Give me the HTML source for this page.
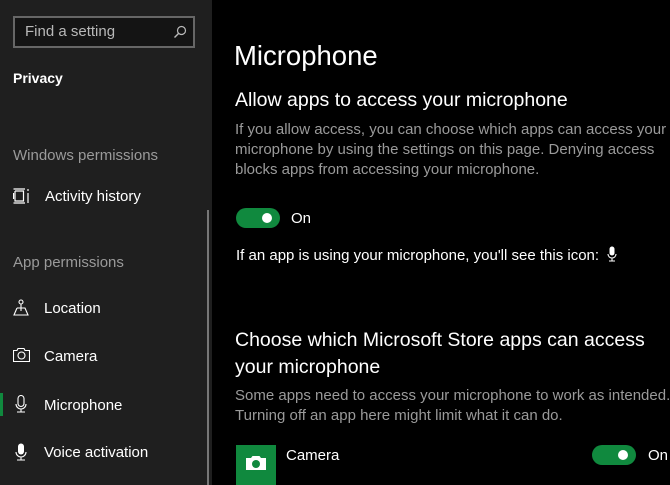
<!DOCTYPE html>
<html><head><style>
body{margin:0;width:670px;height:485px;overflow:hidden;background:#000;font-family:"Liberation Sans",sans-serif;color:#fff;position:relative}
.a{position:absolute;white-space:nowrap}
#side{position:absolute;left:0;top:0;width:212px;height:485px;background:#1f1f1f}
.g{color:#9a9a9a}
.tg{position:absolute;width:44px;height:20px;border-radius:10px;background:#10893e}
.tg:after{content:"";position:absolute;right:8px;top:5px;width:10px;height:10px;border-radius:5px;background:#fff}
</style></head><body>
<div id="side">
<div class="a" style="left:13px;top:16px;width:178px;height:28px;border:2px solid #666;background:#141414"></div>
<div class="a" style="left:25px;top:23px;font-size:15px;color:#b8b8b8">Find a setting</div>
<svg class="a" style="left:173px;top:25px" width="14" height="14" viewBox="0 0 14 14"><circle cx="8.5" cy="5.5" r="4" fill="none" stroke="#bbb" stroke-width="1.2"/><path d="M5.5 8.5L1.5 12.5" stroke="#bbb" stroke-width="1.4"/></svg>
<div class="a" style="left:13px;top:70px;font-size:14px;font-weight:bold">Privacy</div>
<div class="a g" style="left:13px;top:147px;font-size:15px">Windows permissions</div>
<svg class="a" style="left:13px;top:188px" width="17" height="16" viewBox="0 0 17 16"><path d="M0.5 1H12M0.5 15H12M2 3H10.5V13H2V3M0.5 5v6M15 1v2M15 5v10" stroke="#fff" fill="none" stroke-width="1.2"/></svg>
<div class="a" style="left:45px;top:188px;font-size:15px">Activity history</div>
<div class="a g" style="left:13px;top:254px;font-size:15px">App permissions</div>
<svg class="a" style="left:13px;top:299px" width="16" height="17" viewBox="0 0 16 17"><circle cx="8" cy="3" r="2" fill="none" stroke="#fff" stroke-width="1.1"/><path d="M8 5V12M4 9H12L15 16H1L4 9" fill="none" stroke="#fff" stroke-width="1.1"/></svg>
<div class="a" style="left:44px;top:300px;font-size:15px">Location</div>
<svg class="a" style="left:13px;top:348px" width="17" height="15" viewBox="0 0 17 15"><path d="M0.5 2.5H4L5 0.5H11L12 2.5H16.5V13.5H0.5Z" fill="none" stroke="#fff" stroke-width="1.1"/><circle cx="8.5" cy="7.5" r="3.5" fill="none" stroke="#fff" stroke-width="1.1"/></svg>
<div class="a" style="left:44px;top:348px;font-size:15px">Camera</div>
<div class="a" style="left:0;top:393px;width:3px;height:23px;background:#10893e"></div>
<svg class="a" style="left:15px;top:395px" width="12" height="18" viewBox="0 0 12 18"><rect x="3" y="0.5" width="6" height="11" rx="3" fill="none" stroke="#fff" stroke-width="1.1"/><path d="M1 9a5 5 0 0 0 10 0M6 14V17M2 17H10" fill="none" stroke="#fff" stroke-width="1.1"/></svg>
<div class="a" style="left:44px;top:397px;font-size:15px">Microphone</div>
<svg class="a" style="left:15px;top:443px" width="12" height="18" viewBox="0 0 12 18"><rect x="3" y="0.5" width="6" height="11" rx="3" fill="#fff"/><path d="M1 9a5 5 0 0 0 10 0M6 14V17M2 17H10" fill="none" stroke="#fff" stroke-width="1.1"/></svg>
<div class="a" style="left:44px;top:444px;font-size:15px">Voice activation</div>
<div class="a" style="left:207px;top:210px;width:2px;height:275px;background:#777"></div>
</div>
<div class="a" style="left:234px;top:40px;font-size:27.5px">Microphone</div>
<div class="a" style="left:235px;top:89px;font-size:19.5px">Allow apps to access your microphone</div>
<div class="a g" style="left:235px;top:120px;font-size:15px;line-height:20px">If you allow access, you can choose which apps can access your<br>microphone by using the settings on this page. Denying access<br>blocks apps from accessing your microphone.</div>
<div class="tg" style="left:236px;top:208px"></div>
<div class="a" style="left:291px;top:210px;font-size:15px">On</div>
<div class="a" style="left:236px;top:247px;font-size:15px">If an app is using your microphone, you'll see this icon:</div>
<svg class="a" style="left:607px;top:246px" width="10" height="16" viewBox="0 0 10 16"><rect x="2.5" y="0.5" width="5" height="9" rx="2.5" fill="#fff"/><path d="M1 8a4 4 0 0 0 8 0M5 12V15M2 15H8" fill="none" stroke="#fff" stroke-width="1.1"/></svg>
<div class="a" style="left:235px;top:327px;font-size:19.5px;line-height:27px">Choose which Microsoft Store apps can access<br>your microphone</div>
<div class="a g" style="left:235px;top:386px;font-size:15px;line-height:20px">Some apps need to access your microphone to work as intended.<br>Turning off an app here might limit what it can do.</div>
<div class="a" style="left:236px;top:445px;width:40px;height:40px;background:#10893e"></div>
<svg class="a" style="left:245px;top:455px" width="22" height="16" viewBox="0 0 22 16"><path d="M1 3H6L7.5 1H14.5L16 3H21V15H1Z" fill="#fff"/><circle cx="11" cy="9" r="4" fill="#10893e"/></svg>
<div class="a" style="left:286px;top:447px;font-size:15px">Camera</div>
<div class="tg" style="left:592px;top:445px"></div>
<div class="a" style="left:648px;top:447px;font-size:15px">On</div>
</body></html>
